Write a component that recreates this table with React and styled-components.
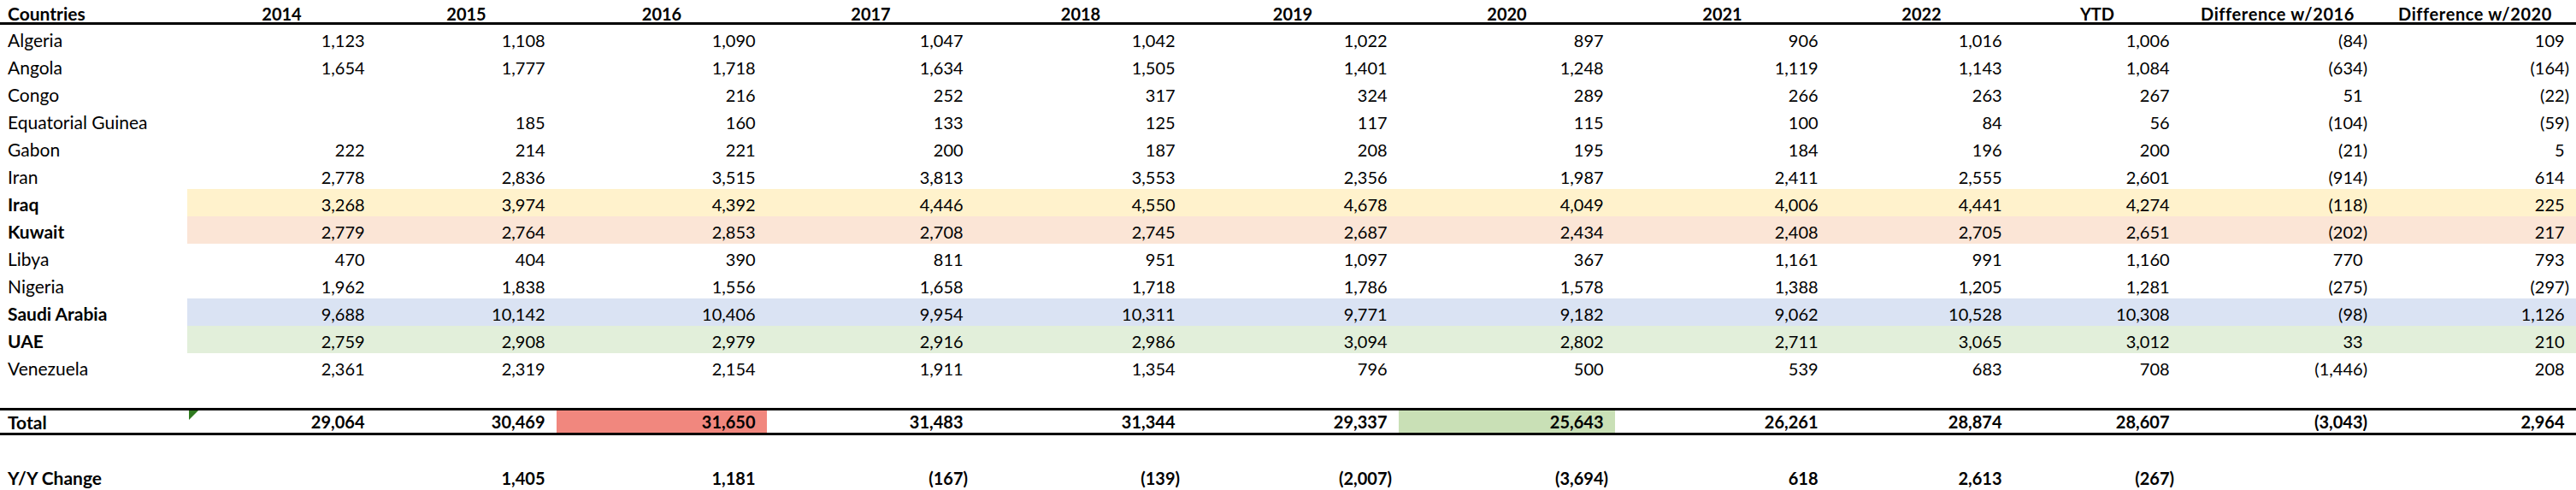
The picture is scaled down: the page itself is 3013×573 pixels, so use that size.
import React from 'react';
import styled, { createGlobalStyle } from 'styled-components';

// column widths measured on the sheet
const COLS = '219px 221px 211px 246px 243px 248px 248px 253px 251px 215px 196px 226px 236px';

const GlobalStyle = createGlobalStyle`
    html, body {
        margin: 0;
        padding: 0;
        background: #ffffff;
        overflow: hidden;
    }
    body {
        font-family: Lato, 'Open Sans', sans-serif;
        font-size: 20px;
        color: #000000;
    }
`;

const Sheet = styled.div`
    width: 3013px;
    display: flex;
    flex-direction: column;
`;

const Row = styled.div`
    display: grid;
    grid-template-columns: ${COLS};
    height: 32px;
    box-sizing: border-box;
`;

const HeaderRow = styled(Row)`
    height: 29px;
    border-bottom: 3px solid #000;
`;

const TotalRow = styled(Row)`
    border-top: 3px solid #000;
    border-bottom: 3px solid #000;

    & > div {
        padding-top: 0;
    }
`;

const Cell = styled.div`
    position: relative;
    display: flex;
    align-items: center;
    box-sizing: border-box;
    justify-content: ${(p) => (p.$align === 'left' ? 'flex-start' : p.$align === 'center' ? 'center' : 'flex-end')};
    padding-top: 3px;
    padding-left: ${(p) => (p.$align === 'left' ? '9px' : '0')};
    padding-right: ${(p) => (p.$align ? '0' : '8px')};
    background: ${(p) => p.$bg || 'transparent'};
    font-weight: ${(p) => (p.$bold ? 700 : 400)};
    font-size: ${(p) => (p.$align === 'left' ? '21px' : '20px')};
    letter-spacing: ${(p) => (p.$wide ? '0.6px' : '0')};
    white-space: nowrap;
`;

// accounting format keeps a paren-wide space after positive numbers
const Paren = styled.span`
    visibility: hidden;
`;

// excel's little green error flag
const Flag = styled.span`
    position: absolute;
    top: 0;
    left: 2px;
    width: 0;
    height: 0;
    border-top: 11px solid #2f7a1f;
    border-right: 11px solid transparent;
`;

const HEADERS = ['2014', '2015', '2016', '2017', '2018', '2019', '2020', '2021', '2022', 'YTD'];

const DATA = [
    ['Algeria', [1123, 1108, 1090, 1047, 1042, 1022, 897, 906, 1016, 1006, -84, 109]],
    ['Angola', [1654, 1777, 1718, 1634, 1505, 1401, 1248, 1119, 1143, 1084, -634, -164]],
    ['Congo', [null, null, 216, 252, 317, 324, 289, 266, 263, 267, 51, -22]],
    ['Equatorial Guinea', [null, 185, 160, 133, 125, 117, 115, 100, 84, 56, -104, -59]],
    ['Gabon', [222, 214, 221, 200, 187, 208, 195, 184, 196, 200, -21, 5]],
    ['Iran', [2778, 2836, 3515, 3813, 3553, 2356, 1987, 2411, 2555, 2601, -914, 614]],
    ['Iraq', [3268, 3974, 4392, 4446, 4550, 4678, 4049, 4006, 4441, 4274, -118, 225], '#fff2cc'],
    ['Kuwait', [2779, 2764, 2853, 2708, 2745, 2687, 2434, 2408, 2705, 2651, -202, 217], '#fbe5d6'],
    ['Libya', [470, 404, 390, 811, 951, 1097, 367, 1161, 991, 1160, 770, 793]],
    ['Nigeria', [1962, 1838, 1556, 1658, 1718, 1786, 1578, 1388, 1205, 1281, -275, -297]],
    ['Saudi Arabia', [9688, 10142, 10406, 9954, 10311, 9771, 9182, 9062, 10528, 10308, -98, 1126], '#dae3f3'],
    ['UAE', [2759, 2908, 2979, 2916, 2986, 3094, 2802, 2711, 3065, 3012, 33, 210], '#e2efda'],
    ['Venezuela', [2361, 2319, 2154, 1911, 1354, 796, 500, 539, 683, 708, -1446, 208]],
];

const TOTAL = [29064, 30469, 31650, 31483, 31344, 29337, 25643, 26261, 28874, 28607, -3043, 2964];
const CHANGE = [null, 1405, 1181, -167, -139, -2007, -3694, 618, 2613, -267, null, null];

// 2016 and 2020 totals are highlighted
const TOTAL_BG = { 2: '#f1877e', 6: '#c9e0b6' };

function Num({ value }) {
    if (value === null) return null;
    const s = Math.abs(value).toLocaleString('en-US');
    if (value < 0) return <span>({s})</span>;
    return (
        <span>
            {s}
            <Paren>)</Paren>
        </span>
    );
}

function App() {
    return (
        <>
            <GlobalStyle />
            <Sheet>
                <HeaderRow>
                    <Cell $align="left" $bold>Countries</Cell>
                    {HEADERS.map((h) => (
                        <Cell key={h} $align="center" $bold>{h}</Cell>
                    ))}
                    <Cell $align="center" $bold $wide>Difference w/2016</Cell>
                    <Cell $align="center" $bold $wide>Difference w/2020</Cell>
                </HeaderRow>

                {DATA.map(([name, values, band]) => (
                    <Row key={name}>
                        <Cell $align="left" $bold={!!band}>{name}</Cell>
                        {values.map((v, i) => (
                            <Cell key={i} $bg={band}>
                                <Num value={v} />
                            </Cell>
                        ))}
                    </Row>
                ))}

                <Row />

                <TotalRow>
                    <Cell $align="left" $bold>Total</Cell>
                    {TOTAL.map((v, i) => (
                        <Cell key={i} $bold $bg={TOTAL_BG[i]}>
                            {i === 0 && <Flag />}
                            <Num value={v} />
                        </Cell>
                    ))}
                </TotalRow>

                <Row />

                <Row>
                    <Cell $align="left" $bold>Y/Y Change</Cell>
                    {CHANGE.map((v, i) => (
                        <Cell key={i} $bold>
                            <Num value={v} />
                        </Cell>
                    ))}
                </Row>
            </Sheet>
        </>
    );
}

export default App;
